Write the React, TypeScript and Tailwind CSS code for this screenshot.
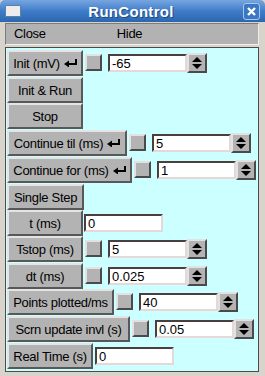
import React from 'react';

type Row = {
  label: string;
  enter?: boolean;
  btnW: string;
  rowH: string;
  check?: boolean;
  value?: string;
  spin?: boolean;
  inputGap?: string;
};

const rows: Row[] = [
  { label: 'Init (mV)', enter: true, btnW: 'w-[76px]', rowH: 'h-[27px]', check: true, value: '-65', spin: true },
  { label: 'Init & Run', btnW: 'w-[76px]', rowH: 'h-[26px]' },
  { label: 'Stop', btnW: 'w-[76px]', rowH: 'h-[27px]' },
  { label: 'Continue til (ms)', enter: true, btnW: 'w-[120px]', rowH: 'h-[27px]', check: true, value: '5', spin: true },
  { label: 'Continue for (ms)', enter: true, btnW: 'w-[125px]', rowH: 'h-[27px]', check: true, value: '1', spin: true },
  { label: 'Single Step', btnW: 'w-[77px]', rowH: 'h-[26px]' },
  { label: 't (ms)', btnW: 'w-[76px]', rowH: 'h-[26px]', value: '0', inputGap: 'ml-px' },
  { label: 'Tstop (ms)', btnW: 'w-[76px]', rowH: 'h-[27px]', check: true, value: '5', spin: true },
  { label: 'dt (ms)', btnW: 'w-[76px]', rowH: 'h-[26px]', check: true, value: '0.025', spin: true },
  { label: 'Points plotted/ms', btnW: 'w-[107px]', rowH: 'h-[27px]', check: true, value: '40', spin: true },
  { label: 'Scrn update invl (s)', btnW: 'w-[123px]', rowH: 'h-[27px]', check: true, value: '0.05', spin: true },
  { label: 'Real Time (s)', btnW: 'w-[86px]', rowH: 'h-[26px]', value: '0', inputGap: 'ml-[2px]' },
];

function EnterArrow() {
  return (
    <svg width="13" height="8" viewBox="0 0 13 8" className="ml-[4px] shrink-0">
      <rect x="11" y="0" width="2" height="6" fill="#000" />
      <rect x="4" y="4" width="9" height="2" fill="#000" />
      <polygon points="0,5 5,1.5 5,8.5" fill="#000" />
    </svg>
  );
}

function Spinner() {
  return (
    <div className="w-[20px] h-[20px] bg-[#b3b3b3] border-2 border-t-[#e2e2e2] border-l-[#e2e2e2] border-r-[#4a4a4a] border-b-[#4a4a4a] flex flex-col items-center justify-center gap-[2px]">
      <svg width="10" height="5" viewBox="0 0 10 5"><polygon points="5,0 10,5 0,5" fill="#000" /></svg>
      <svg width="10" height="5" viewBox="0 0 10 5"><polygon points="0,0 10,0 5,5" fill="#000" /></svg>
    </div>
  );
}

export default function App() {
  return (
    <div className="w-[265px] h-[376px] bg-[#d8d4cc] flex flex-col font-['Liberation_Sans',Arial,sans-serif] text-black overflow-hidden">
      <div className="h-[22px] shrink-0 rounded-t-[5px] bg-gradient-to-b from-[#76a6e0] via-[#3f7dc9] to-[#2c66b0] flex items-center px-[5px]">
        <div className="w-[16px] h-[12px] bg-[#ececec] border border-[#5d7fa8] rounded-[1px]" />
        <div className="flex-1 text-center text-white font-bold text-[15px] leading-none tracking-[0.3px] [text-shadow:1px_1px_0_#21477a] pr-[2px]">RunControl</div>
        <div className="w-[17px] h-[17px] rounded-[3px] border border-[#a9c8ee] bg-[#3b78c3] flex items-center justify-center">
          <svg width="9" height="9" viewBox="0 0 9 9">
            <path d="M1 1 L8 8 M8 1 L1 8" stroke="#fff" strokeWidth="2.4" />
          </svg>
        </div>
      </div>

      <div className="flex-1 flex flex-col pl-[5px] pr-[6px] pt-px pb-[4px]">
        <div className="h-[22px] shrink-0 bg-[#b2b2b2] border border-t-[#7c7c7c] border-l-[#7c7c7c] border-r-[#efefef] border-b-[#efefef] flex items-center text-[13px] tracking-[-0.3px]">
          <span className="ml-[8px]">Close</span>
          <span className="ml-[71px]">Hide</span>
        </div>
        <div className="flex-1 mt-[2px] bg-[#ccffff] border border-[#4c4c4c] pt-[2px] pl-px flex flex-col">
          {rows.map((r) => (
            <div key={r.label} className={`${r.rowH} flex items-start shrink-0`}>
              <div className={`${r.btnW} h-[26px] shrink-0 bg-[#b3b3b3] border-2 border-t-[#e4e4e4] border-l-[#e4e4e4] border-r-[#585858] border-b-[#585858] flex items-center justify-center text-[13px] tracking-[-0.3px] leading-none whitespace-nowrap`}>
                <span>{r.label}</span>
                {r.enter && <EnterArrow />}
              </div>
              {r.check && (
                <div className="ml-[2px] mt-[4px] w-[17px] h-[17px] shrink-0 bg-[#b3b3b3] border-2 border-t-[#e2e2e2] border-l-[#e2e2e2] border-r-[#4a4a4a] border-b-[#4a4a4a]" />
              )}
              {r.value !== undefined && (
                <div className={`${r.inputGap ?? 'ml-[6px]'} mt-[4px] flex items-start`}>
                  <div className="w-[79px] h-[18px] bg-white border-2 border-t-[#4a3e3e] border-l-[#4a3e3e] border-r-[#e6d8d8] border-b-[#e6d8d8] flex items-center pl-[2px] text-[13px] leading-none">
                    {r.value}
                  </div>
                  {r.spin && (
                    <div className="-mt-px">
                      <Spinner />
                    </div>
                  )}
                </div>
              )}
            </div>
          ))}
        </div>
      </div>
    </div>
  );
}
